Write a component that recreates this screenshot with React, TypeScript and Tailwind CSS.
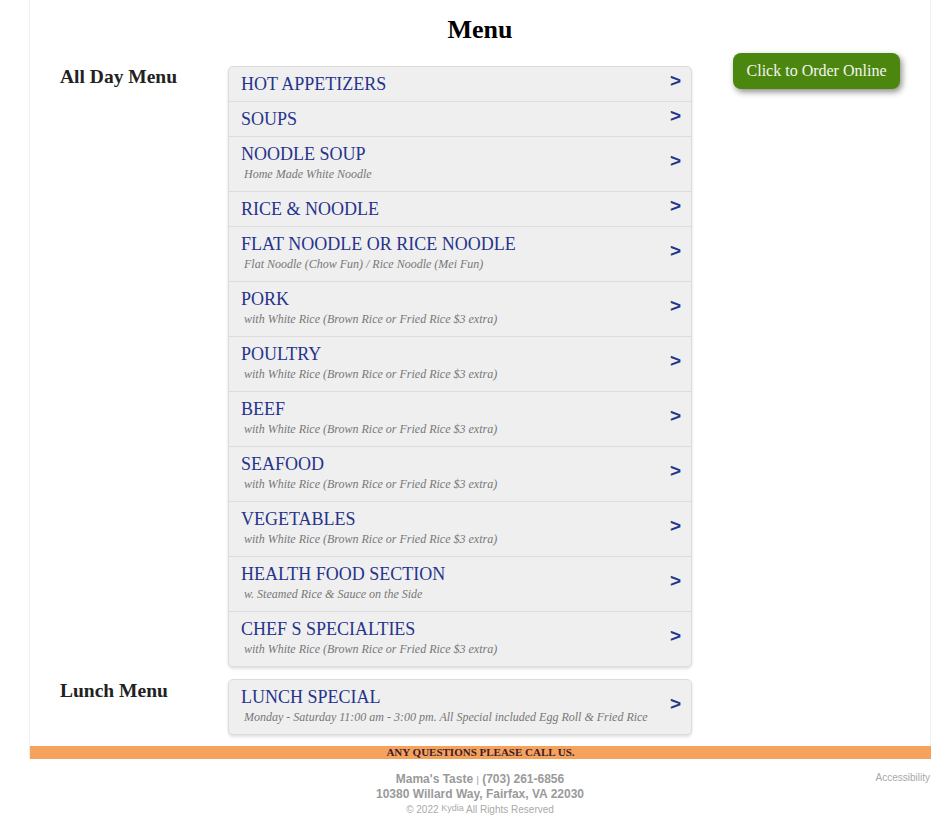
type Item = { title: string; sub?: string };

const RICE = "with White Rice (Brown Rice or Fried Rice $3 extra)";

const allDay: Item[] = [
  { title: "HOT APPETIZERS" },
  { title: "SOUPS" },
  { title: "NOODLE SOUP", sub: "Home Made White Noodle" },
  { title: "RICE & NOODLE" },
  { title: "FLAT NOODLE OR RICE NOODLE", sub: "Flat Noodle (Chow Fun) / Rice Noodle (Mei Fun)" },
  { title: "PORK", sub: RICE },
  { title: "POULTRY", sub: RICE },
  { title: "BEEF", sub: RICE },
  { title: "SEAFOOD", sub: RICE },
  { title: "VEGETABLES", sub: RICE },
  { title: "HEALTH FOOD SECTION", sub: "w. Steamed Rice & Sauce on the Side" },
  { title: "CHEF S SPECIALTIES", sub: RICE },
];

const lunch: Item[] = [
  { title: "LUNCH SPECIAL", sub: "Monday - Saturday 11:00 am - 3:00 pm. All Special included Egg Roll & Fried Rice" },
];

function MenuList({ items }: { items: Item[] }) {
  return (
    <div className="w-[464px] rounded-[5px] border border-[#dcdcdc] bg-[#efefef] shadow-[0_2px_3px_rgba(0,0,0,0.12)]">
      {items.map((it, i) => (
        <div
          key={it.title}
          className={`flex items-center justify-between pl-3 pr-[10px] py-[7px] ${i > 0 ? "border-t border-[#dcdcdc]" : ""}`}
        >
          <div>
            <div className="text-[18px] leading-[20px] text-[#26348b]">{it.title}</div>
            {it.sub && (
              <div className="pl-[3px] text-[12px] leading-[20px] italic text-[#777]">{it.sub}</div>
            )}
          </div>
          <span className="-translate-y-[3px] font-['Liberation_Sans',Arial,sans-serif] text-[19px] font-bold leading-[20px] text-[#26348b]">
            &gt;
          </span>
        </div>
      ))}
    </div>
  );
}

export default function App() {
  return (
    <div className="min-h-[822px] bg-white font-['Liberation_Serif','Times_New_Roman',serif]">
      <div className="ml-[29px] w-[902px] border-x border-[#f0f0f0]">
        <h1 className="pt-[14px] text-center text-[26px] font-bold leading-[32px] text-black">Menu</h1>

        <div className="mt-[20px] flex">
          <div className="flex flex-col">
            <div className="flex">
              <h2 className="w-[198px] pl-[30px] text-[19.5px] font-bold leading-[22px] text-[#222]">All Day Menu</h2>
              <MenuList items={allDay} />
            </div>
            <div className="mt-[12px] flex">
              <h2 className="w-[198px] pl-[30px] pt-[1px] text-[19.5px] font-bold leading-[22px] text-[#222]">Lunch Menu</h2>
              <MenuList items={lunch} />
            </div>
          </div>
          <div className="ml-[41px] -mt-[13px]">
            <button className="h-[36px] w-[167px] rounded-[8px] bg-[#4b870f] text-[16px] leading-[20px] text-[#f4f4f4] shadow-[2px_3px_6px_rgba(0,0,0,0.45)]">
              Click to Order Online
            </button>
          </div>
        </div>

        <div className="mt-[11px] -mr-px h-[13px] bg-[#f5a25d] text-center text-[11px] font-bold leading-[13px] text-[#3b1c2c]">
          ANY QUESTIONS PLEASE CALL US.
        </div>
      </div>

      <div className="relative ml-[29px] w-[902px] pt-[13px] text-center font-['Liberation_Sans',Arial,sans-serif] text-[#9a9a9a]">
        <div className="absolute right-[1px] top-[13px] text-[10px] leading-[12px] text-[#a8a8a8]">Accessibility</div>
        <div className="text-[12px] font-bold leading-[14px]">
          Mama's Taste <span className="text-[9px] font-normal">|</span> (703) 261-6856
        </div>
        <div className="text-[12px] font-bold leading-[14px]">10380 Willard Way, Fairfax, VA 22030</div>
        <div className="mt-[2px] text-[10px] leading-[14px] text-[#aaa]">
          © 2022 <span className="relative -top-[2px] text-[9px]">Kydia</span> All Rights Reserved
        </div>
      </div>
    </div>
  );
}
